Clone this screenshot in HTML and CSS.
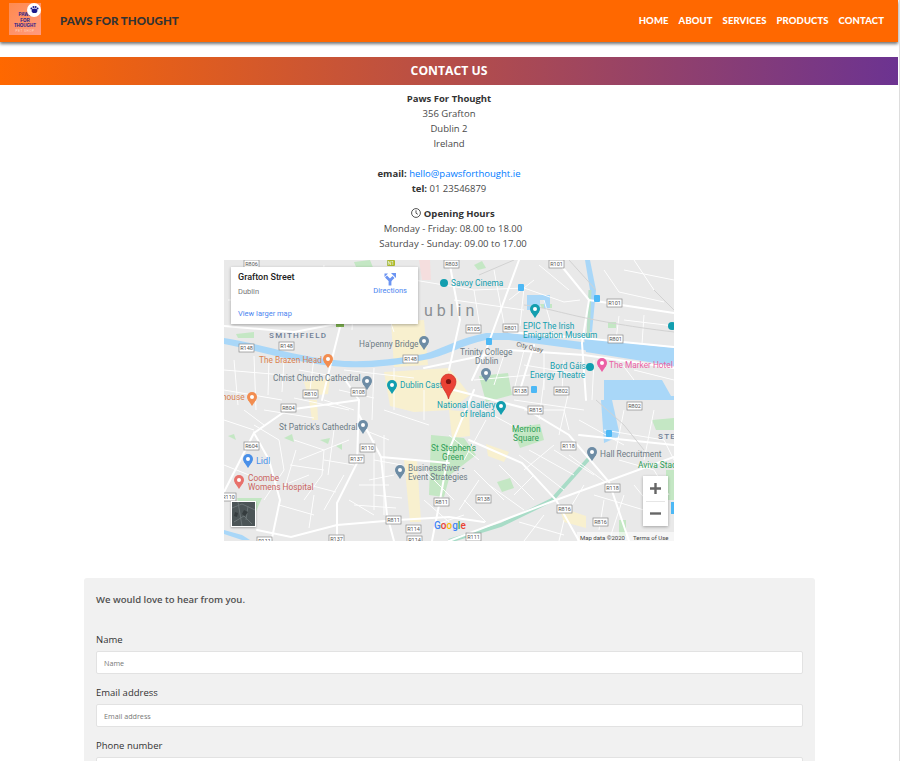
FILE: index.html
```html
<!DOCTYPE html>
<html lang="en">
<head>
<meta charset="utf-8">
<title>Paws For Thought - Contact</title>
<link rel="stylesheet" href="styles.css">
</head>
<body>
<div class="page">
  <header class="topbar">
    <div class="brand">
      <div class="logo">
        <span class="logo-paw"><svg viewBox="0 0 14 14" width="9" height="9"><ellipse cx="7" cy="9" rx="4.5" ry="3.6" fill="#1a1a8c"/><circle cx="2.2" cy="5.4" r="1.5" fill="#1a1a8c"/><circle cx="5.4" cy="3" r="1.6" fill="#1a1a8c"/><circle cx="8.8" cy="3" r="1.6" fill="#1a1a8c"/><circle cx="11.8" cy="5.4" r="1.5" fill="#1a1a8c"/></svg></span>
        <span class="logo-text">PAWS<br>FOR<br>THOUGHT</span>
        <span class="logo-sub">PET SHOP</span>
      </div>
      <span class="brand-name">PAWS FOR THOUGHT</span>
    </div>
    <nav class="nav">
      <a href="#">HOME</a><a href="#">ABOUT</a><a href="#">SERVICES</a><a href="#">PRODUCTS</a><a href="#" class="current">CONTACT</a>
    </nav>
  </header>

  <h1 class="banner">CONTACT US</h1>

  <section class="details">
    <p><b>Paws For Thought</b><br>356 Grafton<br>Dublin 2<br>Ireland<br><br><b>email:</b> <a href="#">hello@pawsforthought.ie</a><br><b>tel:</b> 01 23546879</p>
    <p class="hours"><svg class="clock" viewBox="0 0 12 12" width="10" height="10"><circle cx="6" cy="6" r="5.3" fill="none" stroke="#333" stroke-width="1"/><path d="M6 2.8V6.2L8.2 7.6" fill="none" stroke="#333" stroke-width="1"/></svg> <b>Opening Hours</b><br>Monday - Friday: 08.00 to 18.00<br>Saturday - Sunday: 09.00 to 17.00</p>
  </section>

  <div class="map">
    <svg class="map-art" viewBox="0 0 450 281" width="450" height="281">
      <rect width="450" height="281" fill="#e9e9e9"/>
      <!-- built-up shading -->
      <g fill="#f8f0cf">
        <path d="M167 62L200 60L204 105L170 107Z"/>
        <path d="M160 112L225 108L246 135L226 150L190 152L166 146Z"/>
        <path d="M225 150L245 152L246 176L228 178Z"/>
        <path d="M180 200L193 200L197 262L186 262Z"/>
        <path d="M262 184L285 192L280 202L264 196Z"/>
        <path d="M335 247L362 256L362 268L340 262Z"/>
        <path d="M85 140L93 140L94 160L88 160Z"/>
        <path d="M80 122L106 118L104 134L84 136Z"/>
      </g>
      <!-- parks -->
      <g fill="#c4e7c4">
        <path d="M207 175L240 178L252 195L226 215L220 237L205 235Z"/>
        <path d="M288 168L316 164L320 180L296 188Z"/>
        <path d="M255 116L284 113L288 135L262 142Z"/>
        <path d="M273 222L286 218L290 228L278 232Z"/>
        <path d="M428 160L450 158V170H432ZM442 210H450V240H442Z"/>
        <path d="M13 238L38 238L30 256L18 258Z"/>
        <path d="M60 178L68 174L70 182ZM96 180L106 178L104 184ZM112 186L118 184L118 190ZM4 176L10 174L12 180Z"/>
        <path d="M12 74L30 72L30 78L14 78Z"/>
        <path d="M130 2L146 0L150 10L134 12Z"/>
        <path d="M316 44L328 44L328 48L318 48Z"/>
        <path d="M384 62L392 62L392 68L384 68Z"/>
        <path d="M395 260H402V276H395Z"/>
        <path d="M250 5L258 1L262 8L254 10Z"/>
      </g>
      <path d="M195 0L206 0L207 20L198 20Z" fill="#f5dede"/>

      <!-- water -->
      <g fill="#a9d7f8">
        <path d="M0 78C30 82 70 96 110 100C135 103 165 100 200 94C215 90 235 78 262 73L285 73L358 82L450 88V106L360 90L285 80L262 80C240 84 220 97 200 100C165 107 135 109 108 106C70 102 30 90 0 84Z"/>
        <path d="M360 78L450 88V106L362 92Z"/>
        <path d="M361 0H366L372 30L368 72H363L366 30Z"/>
        <path d="M303 35H326V48H320V40H316V50H303Z"/>
        <path d="M380 120H438L447 136H450V140H380Z"/>
        <path d="M377 140H388L396 176L380 183Z"/>
        <path d="M0 270L18 275L26 280H18L0 274Z"/>
      </g>
      <path d="M368 195L328 240L277 265L225 281" fill="none" stroke="#a8dcc7" stroke-width="4"/>
      <path d="M366 30L364 78" fill="none" stroke="#b9e0c8" stroke-width="3"/>

      <!-- minor streets -->
      <g fill="none" stroke="#fff" stroke-width="1" opacity=".95">
        <path d="M18 15H60L88 50L60 62H15ZM100 5L95 62M130 20L128 70M150 14L170 72M40 22L42 60M4 40H58M70 20L110 30M20 28H56M30 14V60M80 10L90 60M110 14L106 62M140 30L112 40M118 50L160 44"/>
        <path d="M190 20L250 30L300 28L340 42L356 40M250 30L256 68M300 28L296 66M320 40L330 75M380 10L395 32L440 42M395 56L392 80M420 55L418 84M400 60L450 66M270 10L280 64M230 40L300 50M400 10L450 20M410 0L430 30M315 5L345 30M285 40L310 20"/>
        <path d="M60 100L58 132M90 98L86 130M30 96L32 150M0 130L58 140M120 110L190 118M150 108L148 160M170 108L170 150M200 130L200 160M0 110L60 115M10 100L14 145M45 100L44 135M75 110L120 118M115 130L150 138M100 140L130 150M70 138L125 150M40 150L90 158M160 150L205 165"/>
        <path d="M300 90L290 130M320 92L320 130M250 120L340 112M340 100L338 130M280 95L270 125M370 100L368 140M300 150L340 150L345 170M380 170L440 180L450 200M400 150L392 190M430 150L420 200M300 105L360 115M290 140L360 150M250 145L300 172M262 160L240 200M320 120L315 160M345 130L335 175M355 160L400 185M410 110L450 120M395 100L410 120"/>
        <path d="M30 165L55 180L60 210L40 240M70 180L100 190L98 215L80 240M100 200L130 205M85 225L112 232M75 200L125 180M150 180L150 250M170 215L145 220M150 200L178 205M150 235L178 238M110 170L104 215M90 235L85 268M125 240L150 255M66 205L100 210M60 225L85 215M55 245L90 255M72 190L60 230M120 215L100 250M140 170L165 180M160 175L160 255M135 225L165 225M130 245L172 248M20 150L40 165M0 160L30 170M0 205L25 215"/>
        <path d="M250 210L280 240M295 195L340 230M240 240L262 262M200 210L230 240M225 175L255 200M310 215L290 235M330 185L300 210M360 225L345 250M395 200L430 210L445 235M410 225L440 262M370 235L420 250M295 262L340 275M340 260L335 281M200 240L225 262M370 215L330 190M275 205L310 240M265 225L300 250M305 190L350 215M255 220L235 250M345 195L385 225M380 240L375 270M400 235L385 281M320 255L300 281M210 265L240 255"/>
      </g>
      <!-- main roads -->
      <g fill="none" stroke="#fff" stroke-width="2" stroke-linecap="round">
        <path d="M0 66L70 72L117 63M117 63L107 103L98 140"/>
        <path d="M285 72L358 78L450 87M200 108L285 90L360 95L450 108"/>
        <path d="M335 3L365 40L450 53M365 40L358 83L362 140"/>
        <path d="M262 90L295 0M262 90L248 120M225 0L236 60L225 110"/>
        <path d="M245 180L298 203L332 240L355 281M332 240L450 197"/>
        <path d="M225 281L332 240M33 270L67 277L113 265L173 260L225 257L260 262"/>
        <path d="M113 281L113 243L133 203L135 140L120 118"/>
        <path d="M30 173L63 150L135 140M0 232L30 173L45 200L56 240L48 278"/>
        <path d="M135 155L157 197L225 203M157 197L163 255L170 281M230 130L300 148L345 175L385 222L405 281"/>
        <path d="M250 130L225 190L216 240L208 281M310 85L296 130M355 175L450 185"/>
      </g>
      <path d="M300 45C330 48 350 60 450 72M255 15L290 0M345 0L372 30M430 30L450 50M372 140L400 165L420 190" fill="none" stroke="#d2d2d2" stroke-width="1"/>

      <!-- road shields -->
      <g class="shields">
        <g transform="translate(20 0)"><rect width="15" height="8"/><text x="7.5" y="6">R806</text></g>
        <g transform="translate(220 0)"><rect width="15" height="8"/><text x="7.5" y="6">R803</text></g>
        <g transform="translate(325 0)"><rect width="15" height="8"/><text x="7.5" y="6">R101</text></g>
        <g transform="translate(383 39)"><rect width="15" height="8"/><text x="7.5" y="6">R101</text></g>
        <g transform="translate(242 65)"><rect width="15" height="8"/><text x="7.5" y="6">R105</text></g>
        <g transform="translate(279 64)"><rect width="15" height="8"/><text x="7.5" y="6">R801</text></g>
        <g transform="translate(384 75)"><rect width="15" height="8"/><text x="7.5" y="6">R801</text></g>
        <g transform="translate(15 84)"><rect width="15" height="8"/><text x="7.5" y="6">R148</text></g>
        <g transform="translate(55 82)"><rect width="15" height="8"/><text x="7.5" y="6">R148</text></g>
        <g transform="translate(179 95)"><rect width="15" height="8"/><text x="7.5" y="6">R148</text></g>
        <g transform="translate(79 130)"><rect width="15" height="8"/><text x="7.5" y="6">R810</text></g>
        <g transform="translate(127 128)"><rect width="15" height="8"/><text x="7.5" y="6">R108</text></g>
        <g transform="translate(289 127)"><rect width="15" height="8"/><text x="7.5" y="6">R138</text></g>
        <g transform="translate(330 127)"><rect width="15" height="8"/><text x="7.5" y="6">R802</text></g>
        <g transform="translate(57 144)"><rect width="15" height="8"/><text x="7.5" y="6">R804</text></g>
        <g transform="translate(20 182)"><rect width="15" height="8"/><text x="7.5" y="6">R604</text></g>
        <g transform="translate(136 184)"><rect width="15" height="8"/><text x="7.5" y="6">R110</text></g>
        <g transform="translate(125 195)"><rect width="15" height="8"/><text x="7.5" y="6">R137</text></g>
        <g transform="translate(-3 233)"><rect width="15" height="8"/><text x="7.5" y="6">R110</text></g>
        <g transform="translate(210 238)"><rect width="15" height="8"/><text x="7.5" y="6">R811</text></g>
        <g transform="translate(162 256)"><rect width="15" height="8"/><text x="7.5" y="6">R811</text></g>
        <g transform="translate(182 265)"><rect width="15" height="8"/><text x="7.5" y="6">R114</text></g>
        <g transform="translate(183 276)"><rect width="15" height="8"/><text x="7.5" y="6">R114</text></g>
        <g transform="translate(105 275)"><rect width="15" height="8"/><text x="7.5" y="6">R137</text></g>
        <g transform="translate(33 277)"><rect width="15" height="8"/><text x="7.5" y="6">R111</text></g>
        <g transform="translate(304 146)"><rect width="15" height="8"/><text x="7.5" y="6">R815</text></g>
        <g transform="translate(403 142)"><rect width="15" height="8"/><text x="7.5" y="6">R802</text></g>
        <g transform="translate(337 182)"><rect width="15" height="8"/><text x="7.5" y="6">R118</text></g>
        <g transform="translate(381 224)"><rect width="15" height="8"/><text x="7.5" y="6">R118</text></g>
        <g transform="translate(252 235)"><rect width="15" height="8"/><text x="7.5" y="6">R138</text></g>
        <g transform="translate(333 245)"><rect width="15" height="8"/><text x="7.5" y="6">R816</text></g>
        <g transform="translate(369 258)"><rect width="15" height="8"/><text x="7.5" y="6">R816</text></g>
        <g transform="translate(242 273)"><rect width="15" height="8"/><text x="7.5" y="6">R111</text></g>
      </g>
      <rect x="112" y="62" width="8" height="5" fill="#7cae4e"/>
      <rect x="163" y="0" width="8" height="6" rx="1" fill="#a8b82e"/>
      <text class="motorway" x="167" y="5">N1</text>

      <!-- labels -->
      <text class="district" x="200" y="56">u b l i n</text>
      <text class="area" x="45" y="78">SMITHFIELD</text>
      <text class="area" x="434" y="179">STE</text>
      <g class="teal">
        <text x="227" y="26">Savoy Cinema</text>
        <text x="299" y="69">EPIC The Irish</text>
        <text x="299" y="78">Emigration Museum</text>
        <text x="326" y="108.500">Bord Gáis</text>
        <text x="306" y="117.500">Energy Theatre</text>
        <text x="176" y="128">Dublin Castle</text>
        <text x="213" y="148">National Gallery</text>
        <text x="236" y="157">of Ireland</text>
      </g>
      <g class="grey">
        <text x="135" y="87">Ha'penny Bridge</text>
        <text x="49" y="121">Christ Church Cathedral</text>
        <text x="55" y="170">St Patrick's Cathedral</text>
        <text x="236" y="95">Trinity College</text>
        <text x="251" y="104">Dublin</text>
        <text x="184" y="211">BusinessRiver -</text>
        <text x="184" y="220">Event Strategies</text>
        <text x="376" y="197">Hall Recruitment</text>
      </g>
      <g class="green">
        <text x="207" y="191">St Stephen's</text>
        <text x="218" y="200">Green</text>
        <text x="288" y="172">Merrion</text>
        <text x="289" y="181">Square</text>
        <text x="414" y="208">Aviva Stadium</text>
      </g>
      <text class="orange" x="35" y="103">The Brazen Head</text>
      <text class="orange" x="-2" y="140">house</text>
      <text class="pink" x="385" y="108">The Marker Hotel</text>
      <text class="blue" x="32" y="204">Lidl</text>
      <text class="red" x="24" y="220.500">Coombe</text>
      <text class="red" x="24" y="229.500">Womens Hospital</text>
      <text class="city" x="292" y="86" transform="rotate(14 292 86)">City Quay</text>

      <!-- pins -->
      <g fill="#129eaf">
        <circle cx="220" cy="23" r="4"/>
        <circle cx="311" cy="49" r="5"/><path d="M307 52L311 58L315 52Z"/>
        <circle cx="168" cy="125" r="5"/><path d="M164 128L168 134L172 128Z"/>
        <circle cx="277" cy="146" r="5"/><path d="M273 149L277 155L281 149Z"/>
        <circle cx="448" cy="66" r="4"/>
        <circle cx="366" cy="107" r="4"/>
      </g>
      <circle cx="378" cy="103" r="5" fill="#ec5fa5"/><path d="M374 106L378 112L382 106Z" fill="#ec5fa5"/>
      <g fill="#6d8ca5">
        <circle cx="143" cy="121" r="5"/><path d="M139 124L143 130L147 124Z"/>
        <circle cx="200" cy="81" r="5"/><path d="M196 84L200 90L204 84Z"/>
        <circle cx="139" cy="165" r="5"/><path d="M135 168L139 174L143 168Z"/>
        <circle cx="262" cy="113" r="5"/><path d="M258 116L262 122L266 116Z"/>
        <circle cx="176" cy="210" r="5"/><path d="M172 213L176 219L180 213Z"/>
        <circle cx="368" cy="192" r="5"/><path d="M364 195L368 201L372 195Z"/>
      </g>
      <circle cx="104" cy="99" r="5" fill="#f28d50"/><path d="M100 102L104 108L108 102Z" fill="#f28d50"/>
      <circle cx="28" cy="137" r="5" fill="#f28d50"/><path d="M24 140L28 146L32 140Z" fill="#f28d50"/>
      <circle cx="24" cy="199" r="5" fill="#4a90e8"/><path d="M20 202L24 208L28 202Z" fill="#4a90e8"/>
      <circle cx="15" cy="220" r="5" fill="#e8716b"/><path d="M11 223L15 229L19 223Z" fill="#e8716b"/>
      <g fill="#fff">
        <circle cx="311" cy="49" r="2"/><circle cx="168" cy="125" r="2"/><circle cx="277" cy="146" r="2"/><circle cx="378" cy="103" r="2"/><circle cx="143" cy="121" r="2"/><circle cx="200" cy="81" r="2"/><circle cx="139" cy="165" r="2"/><circle cx="262" cy="113" r="2"/><circle cx="176" cy="210" r="2"/><circle cx="368" cy="192" r="2"/><circle cx="104" cy="99" r="2"/><circle cx="28" cy="137" r="2"/><circle cx="24" cy="199" r="2"/><circle cx="15" cy="220" r="2"/>
      </g>
      <g fill="#4db8f5">
        <rect x="294" y="24" width="6" height="7" rx="1"/><rect x="370" y="35" width="6" height="7" rx="1"/><rect x="262" y="78" width="6" height="7" rx="1"/><rect x="307" y="126" width="6" height="7" rx="1"/><rect x="382" y="170" width="6" height="7" rx="1"/>
      </g>
      <rect x="447" y="242" width="3" height="12" fill="#4db8f5"/>

      <!-- marker -->
      <path d="M224.500 139C222.500 131 217 128 217 121.500A7.500 7.500 0 0 1 232 121.500C232 128 226.500 131 224.500 139Z" fill="#ea4335" stroke="#c5221f" stroke-width=".6"/>
      <circle cx="224.500" cy="121.500" r="2.600" fill="#7d1410"/>

      <!-- google logo -->
      <text class="glogo" x="210" y="269"><tspan fill="#4285f4">G</tspan><tspan fill="#ea4335">o</tspan><tspan fill="#fbbc05">o</tspan><tspan fill="#4285f4">g</tspan><tspan fill="#34a853">l</tspan><tspan fill="#ea4335">e</tspan></text>

      <!-- attribution strip -->
      <rect x="353" y="272" width="97" height="9" fill="#fff" opacity=".6"/>
      <text class="attrib" x="356" y="279.500">Map data ©2020</text>
      <text class="attrib" x="409" y="279.500">Terms of Use</text>
    </svg>

    <div class="place-card">
      <div class="place-head">
        <div>
          <div class="place-name">Grafton Street</div>
          <div class="place-sub">Dublin</div>
        </div>
        <a class="directions" href="#">
          <svg viewBox="0 0 14 14" width="14" height="14"><path d="M7 13.500V8.500L3 4.500" fill="none" stroke="#6b94f2" stroke-width="2.800"/><path d="M7 8.500L10.500 5" fill="none" stroke="#6b94f2" stroke-width="2.800"/><path d="M1.500 1.500H5L1.500 5ZM8 1H13V6Z" fill="#6b94f2"/></svg>
          <span>Directions</span>
        </a>
      </div>
      <a class="larger" href="#">View larger map</a>
    </div>

    <div class="satellite"><svg viewBox="0 0 23 24" width="23" height="24"><rect width="23" height="24" fill="#4c5557"/><path d="M0 6L10 2L23 8M2 20L12 14L20 22M6 0L10 24M16 4L14 18" fill="none" stroke="#6a7375" stroke-width="1"/><path d="M12 8l4 2-3 4-3-2zM3 10l3 1-1 4-3-1z" fill="#353c3e"/></svg></div>

    <div class="zoom">
      <svg viewBox="0 0 25 25" width="25" height="25"><path d="M7 12.500H18M12.500 7V18" stroke="#666" stroke-width="2.400"/></svg>
      <span class="zoom-rule"></span>
      <svg viewBox="0 0 25 25" width="25" height="25"><path d="M7 12.500H18" stroke="#666" stroke-width="2.400"/></svg>
    </div>
  </div>

  <form class="enquiry">
    <p class="lead">We would love to hear from you.</p>
    <div class="field first">
      <label for="f-name">Name</label>
      <input id="f-name" type="text" placeholder="Name">
    </div>
    <div class="field">
      <label for="f-email">Email address</label>
      <input id="f-email" type="text" placeholder="Email address">
    </div>
    <div class="field">
      <label for="f-phone">Phone number</label>
      <input id="f-phone" type="text" placeholder="Phone number">
    </div>
  </form>
</div>
</body>
</html>
```

FILE: styles.css
```css
* { box-sizing: border-box; }
html, body { margin: 0; height: 761px; overflow: hidden; background: #fff; }
body { font-family: "Open Sans", "Noto Sans", sans-serif; font-size: 9.5px; line-height: 15px; color: #4a4a4a; }

.page { width: 900px; height: 761px; padding-right: 1px; border-right: 1px solid #ddd; overflow: hidden; }

.topbar { height: 42px; background: #ff6800; box-shadow: 0 2px 3px rgba(0,0,0,.55); display: flex; align-items: center; justify-content: space-between; padding: 0 14px 0 9px; }
.brand { display: flex; align-items: center; gap: 19px; }
.brand-name { font-family: "Lato", sans-serif; font-weight: 900; font-size: 11.5px; letter-spacing: 0; color: #333; margin-top: -2px; }

.logo { position: relative; width: 32px; height: 32px; margin-top: -5px; background: linear-gradient(135deg, #ff8a4e, #ff9a80); overflow: hidden; text-align: center; display: flex; flex-direction: column; justify-content: flex-end; padding-bottom: 2px; }
.logo-paw { position: absolute; right: 0; top: 0; width: 14px; height: 14px; border-radius: 50%; background: #fff; display: flex; align-items: center; justify-content: center; }
.logo-text { font-family: "Liberation Sans", sans-serif; font-weight: 700; font-size: 4.5px; line-height: 5.5px; color: #1a1a8c; }
.logo-sub { font-family: "Liberation Sans", sans-serif; font-size: 3px; line-height: 4px; color: #ffd5c0; letter-spacing: .5px; }

.nav { display: flex; gap: 10px; margin-top: -1px; }
.nav a { font-family: "Lato", sans-serif; font-weight: 900; font-size: 9.5px; letter-spacing: .1px; color: #fff; text-decoration: none; }

.banner { margin: 15px 0 0; height: 28px; background: linear-gradient(90deg, #ff6800, #6c3391); color: #fff; font-size: 12.2px; font-weight: 700; line-height: 28px; text-align: center; }

.details { text-align: center; margin-top: 6px; }
.details p { margin: 0 0 10px; }
.details .hours { margin-bottom: 9px; padding-left: 8px; }
.details a { color: #007bff; text-decoration: none; }
.details b { font-weight: 700; color: #333; }
.clock { vertical-align: -1px; }

.map { position: relative; width: 450px; height: 281px; margin: 0 auto; overflow: hidden; }
.map-art { display: block; font-family: "Roboto", sans-serif; }
.map-art text { font-size: 8.300px; }
.map-art .shields rect { fill: #fff; stroke: #8a8a8a; stroke-width: .7; }
.map-art .shields text { font-size: 5.500px; fill: #555; text-anchor: middle; }
.map-art .motorway { font-size: 5px; fill: #fff; text-anchor: middle; }
.map-art .district { font-size: 16px; fill: #8a8f94; }
.map-art .area { font-size: 8px; letter-spacing: 1.300px; font-weight: 500; fill: #6f7f96; }
.map-art .teal text { fill: #129eaf; }
.map-art .grey text { fill: #6d7b85; }
.map-art .green text { fill: #2f9e57; }
.map-art .orange { fill: #d9814f; }
.map-art .pink { fill: #ec5fa5; }
.map-art .blue { fill: #4a90e8; font-size: 9px; }
.map-art .red { fill: #c9655f; }
.map-art .city { font-size: 6.500px; fill: #666; }
.map-art .glogo { font-size: 10px; font-weight: 500; }
.map-art .attrib { font-size: 6px; fill: #444; }

.place-card { position: absolute; left: 7px; top: 7px; width: 187px; height: 57px; background: #fff; box-shadow: 0 1px 3px rgba(0,0,0,.3); padding: 5px 7px 6px; font-family: "Roboto", sans-serif; display: flex; flex-direction: column; justify-content: space-between; }
.place-head { display: flex; justify-content: space-between; }
.place-name { font-size: 9px; font-weight: 500; line-height: 11px; color: #222; }
.place-sub { font-size: 7.500px; line-height: 10px; color: #777; margin-top: 4px; }
.directions { display: flex; flex-direction: column; align-items: center; font-size: 7.500px; line-height: 9px; color: #4a85f0; text-decoration: none; margin-right: 4px; }
.larger { font-size: 7.500px; line-height: 9px; color: #4a85f0; text-decoration: none; }

.satellite { position: absolute; left: 7px; bottom: 14px; width: 25px; height: 26px; border: 1px solid #fff; box-shadow: 0 1px 2px rgba(0,0,0,.3); line-height: 0; }

.zoom { position: absolute; right: 6px; bottom: 15px; width: 25px; height: 50px; background: #fff; box-shadow: 0 1px 3px rgba(0,0,0,.3); display: flex; flex-direction: column; }
.zoom svg { display: block; flex: none; }
.zoom-rule { position: absolute; left: 3px; right: 3px; top: 25px; height: 1px; background: #e6e6e6; }

.enquiry { width: 731px; margin: 37px 0 0 84px; height: 300px; background: #f1f1f1; border-radius: 3px; padding: 14px 12px; }
.lead { margin: 0; font-weight: 600; line-height: 16px; color: #505050; }
.field { margin-top: 10.500px; }
.field.first { margin-top: 23.500px; }
.field label { display: block; line-height: 15px; margin-bottom: 4.500px; color: #333; }
.field input { display: block; width: 100%; height: 23px; background: #fff; border: 1px solid #e2e2e2; border-radius: 2px; padding: 0 7px; font-family: inherit; font-size: 7.200px; outline: none; }
.field input::placeholder { color: #777; }
```
